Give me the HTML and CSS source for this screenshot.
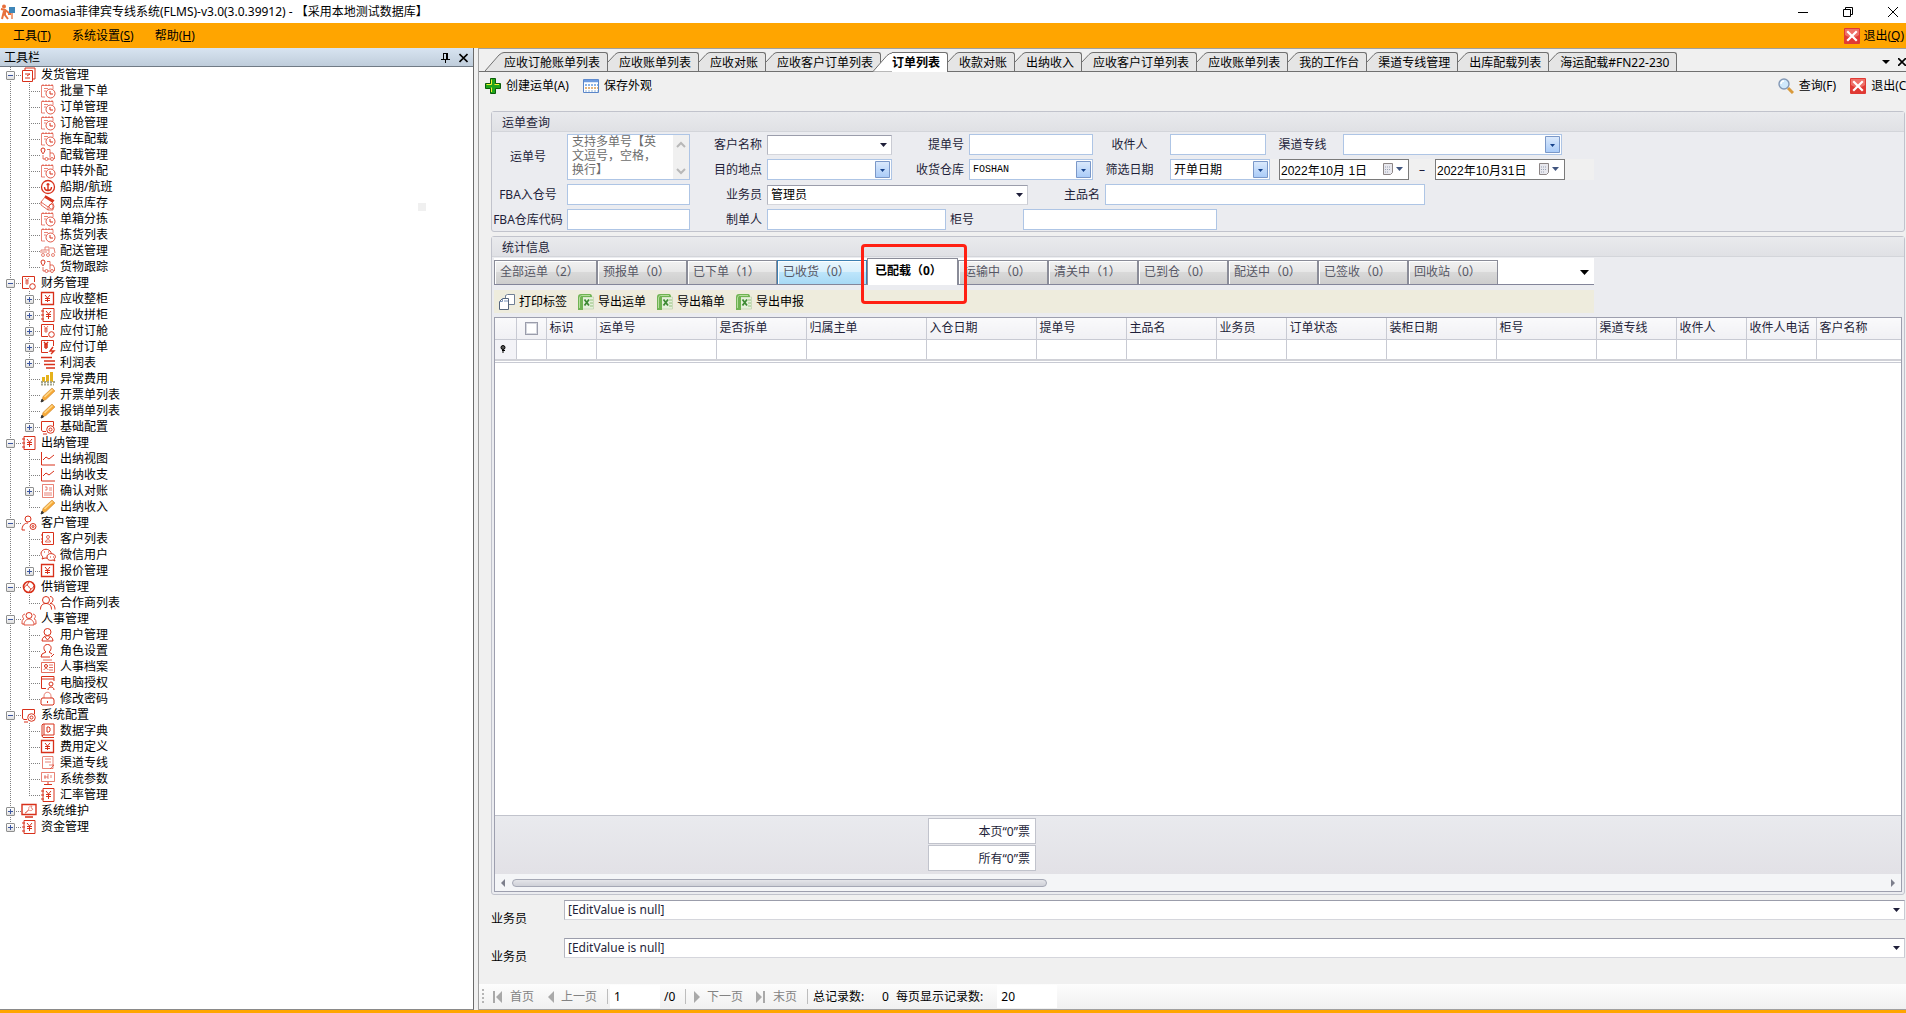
FILE: index.html
```html
<!DOCTYPE html>
<html lang="zh-CN">

<head>
    <meta charset="UTF-8">
    <meta name="viewport" content="width=device-width, initial-scale=1.0">
    <title>Zoomasia菲律宾专线系统(FLMS)</title>
    <link rel="stylesheet" href="styles.css">
</head>

<body>

    <!-- icon set -->
    <svg class="sprite" aria-hidden="true">
        <symbol id="doc" viewBox="0 0 16 16"><path d="M4 3V1h10v11h-2M1.500 3.500h10v11h-10zM4 7h5M4 11h5M6 9l3-2" /></symbol>
        <symbol id="order" viewBox="0 0 16 16"><path d="M5 14H1.500V2.500H13V6M3 1v2M6 1v2M9 1v2M12 1v2M4 5.500h4M4 8h2" opacity=".6" /><circle cx="10.500" cy="10.500" r="4.500" opacity=".8" /><path d="M10 8v3h3" /></symbol>
        <symbol id="truck" viewBox="0 0 16 16"><path d="M1 3a2 2 0 0 1 4 0c0 1-2 4-2 4S1 4 1 3z" /><path d="M7 2.500h3v8M3 8v4h2M8 12h2M10 6h3l1.500 3v3" opacity=".7" /><circle cx="6.500" cy="12" r="1.500" opacity=".7" /><circle cx="12" cy="12" r="1.500" opacity=".7" /></symbol>
        <symbol id="anchor" viewBox="0 0 16 16"><circle cx="8" cy="8" r="6.500" stroke-width="1.300" /><path d="M8 4v8M4.500 8c0 2 1.500 3.500 3.500 3.500S11.500 10 11.500 8M6.500 5.500h3" stroke-width="1.400" /></symbol>
        <symbol id="box" viewBox="0 0 16 16"><path d="M5 1l9 5M5 2l8 5" stroke-width="2" /><path d="M5 2L1 7l7 5 5-5M1 7v3l7 5M8 12v3h5V8" opacity=".7" /><circle cx="11.500" cy="11.500" r="2.500" opacity=".7" /></symbol>
        <symbol id="convoy" viewBox="0 0 16 16"><g opacity=".6"><path d="M1 10V7h4V4h4v6M5 7h4M10 5h4l1 5M2 9h5" /><circle cx="3" cy="12" r="1.500" /><circle cx="8" cy="12" r="1.500" /><circle cx="13" cy="12" r="1.500" /></g></symbol>
        <symbol id="yen" viewBox="0 0 16 16"><path d="M1.500 1.500h12v12h-12z" stroke-width="1.300" /><path d="M5 4l2.500 3L10 4M7.500 7v4M5 7.500h5M5 9.500h5" /></symbol>
        <symbol id="yenbook" viewBox="0 0 16 16"><path d="M3 1.500h11v13H3V1.500M1 4h3M1 8h3M1 12h3" /><path d="M6 4l2.500 3L11 4M8.500 7v5M6 7.500h5M6 9.500h5" /></symbol>
        <symbol id="yengear" viewBox="0 0 16 16"><path d="M8 13.500H1.500v-12h12V7" /><path d="M4 3l2 2.500L8 3M6 5v5M4 6h4M4 8h4" opacity=".7" /><circle cx="11.500" cy="11.500" r="2.800" /></symbol>
        <symbol id="yenbolt" viewBox="0 0 16 16"><path d="M8 13.500H1.500v-12h12V7" /><path d="M4 3l2 2.500L8 3M6 5v5M4 6h4M4 8h4M13 8l-3 4h4l-3 3" stroke-width="1.400" /></symbol>
        <symbol id="lines" viewBox="0 0 16 16"><path d="M1 2.500h11M4 6h11M4 9.500h11M6 13h9" stroke-width="1.500" /></symbol>
        <symbol id="bars" viewBox="0 0 16 16"><path d="M3.500 6v5M7.500 4v7M11.500 1v10" stroke="#e5b21c" stroke-width="3" /><path d="M1 11h14M1 13.500h13" stroke="#a3a58c" stroke-width="2" stroke-dasharray="2 1" /></symbol>
        <symbol id="pencil" viewBox="0 0 16 16"><path d="M1.500 14.500l1.500-5L12 1l3 3-9 8.500z" fill="#f7a836" stroke="#c98b3a" stroke-width=".6" /><path d="M4.500 10l8-7.500" stroke="#ffd88a" stroke-width="1.500" /><path d="M1 15l2.500-1-1.500-1.800z" fill="#333" stroke="#333" /></symbol>
        <symbol id="screengear" viewBox="0 0 16 16"><path d="M6 12.500H3l-1.500-1v-9h12V7M3 15h4" /><circle cx="10.500" cy="10.500" r="3.800" /><circle cx="10.500" cy="10.500" r="1.500" /></symbol>
        <symbol id="linechart" viewBox="0 0 16 16"><path d="M1.500 1v13H15M3 9l3-3 3 2 5-4" /></symbol>
        <symbol id="bill" viewBox="0 0 16 16"><path d="M2.500 1.500h11v13h-11zM5 4h2v3H5M9 5h3M9 7h3M4 10h8M4 12h8" opacity=".6" /></symbol>
        <symbol id="usergear" viewBox="0 0 16 16"><circle cx="7" cy="4" r="3" /><path d="M1 15c0-4 2-7 6-7M1 15h3" /><circle cx="12" cy="11.500" r="3" /><circle cx="12" cy="11.500" r="1" /></symbol>
        <symbol id="contact" viewBox="0 0 16 16"><path d="M2.500 1.500h11v12h-11zM1 4h2M1 8h2M1 11h2" /><circle cx="8" cy="6" r="1.500" opacity=".7" /><path d="M5.500 11c0-3 5-3 5 0z" opacity=".7" /></symbol>
        <symbol id="wechat" viewBox="0 0 16 16"><path d="M3 10l-1 2 3-1c6 1 8-4 5-7S2 2 1 6c0 2 1 3 2 4z" /><path d="M7 10c0-3 3-4 6-3s3 4 1 5l1 2-2-1c-3 1-6 0-6-3z" fill="#fff" /><path d="M4 5h1M8 5h1M10 10h1M13 10h1" /></symbol>
        <symbol id="swap" viewBox="0 0 16 16"><circle cx="8" cy="8" r="5.500" stroke-width="1.600" /><path d="M3 9c2-4 4-3 5-1s3 3 5-1M8 3l-2 3M8 13l2-3" /></symbol>
        <symbol id="pair" viewBox="0 0 16 16"><circle cx="6" cy="5" r="3.500" /><path d="M.5 14.500c0-4 2-6 5.500-6s5.500 2 5.500 6M10 1.500c4 0 4 6 0 7 3 0 5 2 5 6" /></symbol>
        <symbol id="team" viewBox="0 0 16 16"><circle cx="8" cy="4.500" r="3" /><path d="M3 14c0-8 10-8 10 0zM4 3C0 4 2 7 3 8c-2 0-2 2-2 5h2M12 3c4 1 2 4 1 5 2 0 2 2 2 5h-2" opacity=".8" /></symbol>
        <symbol id="user" viewBox="0 0 16 16"><circle cx="7.500" cy="5" r="3.500" /><path d="M2 14c0-7 11-7 11 0zM5 10l2.500 3L10 10" /></symbol>
        <symbol id="role" viewBox="0 0 16 16"><path d="M6 9C3 7 3 1.500 7.500 1.500S12 7 9 9M6 9l-4 2-1 3h9M9 9l3 2M11 14l3-3" /></symbol>
        <symbol id="idcard" viewBox="0 0 16 16"><path d="M3 1h9M1.500 3.500h13v10h-13zM9 6h4M9 8.500h4M9 11h4M4 11c0-2 4-2 4 0" opacity=".7" /><circle cx="6" cy="7" r="1.500" /></symbol>
        <symbol id="pcuser" viewBox="0 0 16 16"><path d="M6 13.500H1.500v-12h12.500V6M2 4h12" /><circle cx="11" cy="9" r="2" /><path d="M8 15c0-4 6-4 6 0" /></symbol>
        <symbol id="lock" viewBox="0 0 16 16"><path d="M4 7V5c0-5 7-5 7 0v2" opacity=".6" /><path d="M2 7h11l1 2v4l-1 1H2l-1-1V9zM7.500 10v2" /></symbol>
        <symbol id="dict" viewBox="0 0 16 16"><path d="M2 13V2l1-1h11v11H3l-1 1 1 1.500h11M4 1v11M7 4h2l1 1v3L9 9H7z" /></symbol>
        <symbol id="scroll" viewBox="0 0 16 16"><path d="M3 1.500h10v12H2.500V1.500M5 4h6M5 7h6M9 10h5l-4 4" opacity=".6" /></symbol>
        <symbol id="params" viewBox="0 0 16 16"><path d="M1.500 1.500h13v9h-13zM5 4v4M8 3v5M11 4v3M4 6h4" opacity=".6" /><path d="M4 13.500h8M8 11v3" /></symbol>
        <symbol id="repair" viewBox="0 0 16 16"><path d="M1 1.500h14v10H1zM4 14h8" stroke-width="1.400" /><path d="M4 10l4-4c-1-2 1-3 3-3l-1 2 2 1c-1 2-3 2-4 1l-3 3z" opacity=".5" /></symbol>
        <symbol id="close-red" viewBox="0 0 16 16"><rect width="16" height="16" rx="1" fill="#e03a34" stroke="none" /><path d="M1 1h14v6c-4 3-10 3-14 0z" fill="#ee7068" stroke="none" /><path d="M4 4l8 8M12 4l-8 8" stroke="#fff" stroke-width="2.200" stroke-linecap="square" /></symbol>
        <symbol id="excel" viewBox="0 0 16 16"><path d="M4 3h11.500v12H4z" fill="#e4f0da" stroke="#b5cfa5" stroke-width=".6" /><path d="M0 3q0-3 3-3h9q2 0 2 3H5v13H0z" fill="#6fb353" stroke="none" /><path d="M1.500 14V4q0-2 2-2.500H12" stroke="#b4dd9c" /><path d="M6.500 5.500l4.500 6M11 5.500l-4.500 6" stroke="#3d8a34" stroke-width="1.800" /><path d="M12 6h3M12 9h3M12 12h3" stroke="#94c07d" /></symbol>
        <symbol id="edge" viewBox="0 0 11 19"><path d="M0 19V10L7 2.500Q9 .5 11 .5V19z" fill="#e5e5e5" stroke="none" /><path d="M0 10L7 2.500Q9 .5 11 .5" stroke="#707070" /></symbol>
        <symbol id="edge-wide" viewBox="0 0 19 19"><path d="M0 19L14 3Q17 .5 19 .5V19z" stroke="none" /><path d="M0 19L14 3Q17 .5 19 .5" fill="none" stroke="#707070" /></symbol>
    </svg>

    <header class="titlebar">
        <svg class="logo" viewBox="0 0 16 16"><circle cx="4" cy="2.500" r="2" fill="#e8703c" /><path d="M1 5l4 1 4 3M5 6v5l3 4M4 7l-2 8M8 10h5" stroke="#e8703c" stroke-width="2" fill="none" /><path d="M9 3h6v6H9z" fill="#3f86b8" /><path d="M12 9v6" stroke="#f0a07c" stroke-width="2" /></svg>
        <h1>Zoomasia菲律宾专线系统(FLMS)-v3.0(3.0.39912) - 【采用本地测试数据库】</h1>
        <div class="window-buttons">
            <button aria-label="最小化"><svg viewBox="0 0 10 10"><path d="M0 5.500h10" /></svg></button>
            <button aria-label="还原"><svg viewBox="0 0 10 10"><path d="M.5 2.500h7v7h-7zM2.500 2.500v-2h7v7h-2" /></svg></button>
            <button aria-label="关闭"><svg viewBox="0 0 10 10"><path d="M0 0l10 10M10 0L0 10" /></svg></button>
        </div>
    </header>

    <nav class="menubar">
        <button>工具(<u>T</u>)</button>
        <button>系统设置(<u>S</u>)</button>
        <button>帮助(<u>H</u>)</button>
        <button class="exit"><svg class="icon"><use href="#close-red" /></svg>退出(<u>Q</u>)</button>
    </nav>

    <div class="workspace">

        <aside class="sidebar">
            <div class="sidebar-head">
                <h2>工具栏</h2>
                <button aria-label="固定"><svg viewBox="0 0 9 10"><path d="M2.500 0v6M2 .5h4M5.500 0v6M6.500 0v6M0 6.500h9M4.500 7v3" /></svg></button>
                <button aria-label="关闭"><svg viewBox="0 0 9 9"><path d="M.5 .5l8 8M8.500 .5l-8 8" stroke-width="1.600" /></svg></button>
            </div>

            <ul class="tree">
                <li>
                    <div class="node"><span class="lead"><button class="toggle minus" aria-label="折叠"></button></span><svg class="icon"><use href="#doc" /></svg>发货管理</div>
                    <ul>
                        <li class="node"><span class="lead"></span><svg class="icon"><use href="#order" /></svg>批量下单</li>
                        <li class="node"><span class="lead"></span><svg class="icon"><use href="#order" /></svg>订单管理</li>
                        <li class="node"><span class="lead"></span><svg class="icon"><use href="#order" /></svg>订舱管理</li>
                        <li class="node"><span class="lead"></span><svg class="icon"><use href="#order" /></svg>拖车配载</li>
                        <li class="node"><span class="lead"></span><svg class="icon"><use href="#truck" /></svg>配载管理</li>
                        <li class="node"><span class="lead"></span><svg class="icon"><use href="#order" /></svg>中转外配</li>
                        <li class="node"><span class="lead"></span><svg class="icon"><use href="#anchor" /></svg>船期/航班</li>
                        <li class="node"><span class="lead"></span><svg class="icon"><use href="#box" /></svg>网点库存</li>
                        <li class="node"><span class="lead"></span><svg class="icon"><use href="#order" /></svg>单箱分拣</li>
                        <li class="node"><span class="lead"></span><svg class="icon"><use href="#order" /></svg>拣货列表</li>
                        <li class="node"><span class="lead"></span><svg class="icon"><use href="#convoy" /></svg>配送管理</li>
                        <li class="node"><span class="lead"></span><svg class="icon"><use href="#truck" /></svg>货物跟踪</li>
                    </ul>
                </li>
                <li>
                    <div class="node"><span class="lead"><button class="toggle minus" aria-label="折叠"></button></span><svg class="icon"><use href="#yengear" /></svg>财务管理</div>
                    <ul>
                        <li class="node"><span class="lead"><button class="toggle" aria-label="展开"></button></span><svg class="icon"><use href="#yen" /></svg>应收整柜</li>
                        <li class="node"><span class="lead"><button class="toggle" aria-label="展开"></button></span><svg class="icon"><use href="#yenbook" /></svg>应收拼柜</li>
                        <li class="node"><span class="lead"><button class="toggle" aria-label="展开"></button></span><svg class="icon"><use href="#yengear" /></svg>应付订舱</li>
                        <li class="node"><span class="lead"><button class="toggle" aria-label="展开"></button></span><svg class="icon"><use href="#yenbolt" /></svg>应付订单</li>
                        <li class="node"><span class="lead"><button class="toggle" aria-label="展开"></button></span><svg class="icon"><use href="#lines" /></svg>利润表</li>
                        <li class="node"><span class="lead"></span><svg class="icon"><use href="#bars" /></svg>异常费用</li>
                        <li class="node"><span class="lead"></span><svg class="icon"><use href="#pencil" /></svg>开票单列表</li>
                        <li class="node"><span class="lead"></span><svg class="icon"><use href="#pencil" /></svg>报销单列表</li>
                        <li class="node"><span class="lead"><button class="toggle" aria-label="展开"></button></span><svg class="icon"><use href="#screengear" /></svg>基础配置</li>
                    </ul>
                </li>
                <li>
                    <div class="node"><span class="lead"><button class="toggle minus" aria-label="折叠"></button></span><svg class="icon"><use href="#yenbook" /></svg>出纳管理</div>
                    <ul>
                        <li class="node"><span class="lead"></span><svg class="icon"><use href="#linechart" /></svg>出纳视图</li>
                        <li class="node"><span class="lead"></span><svg class="icon"><use href="#linechart" /></svg>出纳收支</li>
                        <li class="node"><span class="lead"><button class="toggle" aria-label="展开"></button></span><svg class="icon"><use href="#bill" /></svg>确认对账</li>
                        <li class="node"><span class="lead"></span><svg class="icon"><use href="#pencil" /></svg>出纳收入</li>
                    </ul>
                </li>
                <li>
                    <div class="node"><span class="lead"><button class="toggle minus" aria-label="折叠"></button></span><svg class="icon"><use href="#usergear" /></svg>客户管理</div>
                    <ul>
                        <li class="node"><span class="lead"></span><svg class="icon"><use href="#contact" /></svg>客户列表</li>
                        <li class="node"><span class="lead"></span><svg class="icon"><use href="#wechat" /></svg>微信用户</li>
                        <li class="node"><span class="lead"><button class="toggle" aria-label="展开"></button></span><svg class="icon"><use href="#yen" /></svg>报价管理</li>
                    </ul>
                </li>
                <li>
                    <div class="node"><span class="lead"><button class="toggle minus" aria-label="折叠"></button></span><svg class="icon"><use href="#swap" /></svg>供销管理</div>
                    <ul>
                        <li class="node"><span class="lead"></span><svg class="icon"><use href="#pair" /></svg>合作商列表</li>
                    </ul>
                </li>
                <li>
                    <div class="node"><span class="lead"><button class="toggle minus" aria-label="折叠"></button></span><svg class="icon"><use href="#team" /></svg>人事管理</div>
                    <ul>
                        <li class="node"><span class="lead"></span><svg class="icon"><use href="#user" /></svg>用户管理</li>
                        <li class="node"><span class="lead"></span><svg class="icon"><use href="#role" /></svg>角色设置</li>
                        <li class="node"><span class="lead"></span><svg class="icon"><use href="#idcard" /></svg>人事档案</li>
                        <li class="node"><span class="lead"></span><svg class="icon"><use href="#pcuser" /></svg>电脑授权</li>
                        <li class="node"><span class="lead"></span><svg class="icon"><use href="#lock" /></svg>修改密码</li>
                    </ul>
                </li>
                <li>
                    <div class="node"><span class="lead"><button class="toggle minus" aria-label="折叠"></button></span><svg class="icon"><use href="#screengear" /></svg>系统配置</div>
                    <ul>
                        <li class="node"><span class="lead"></span><svg class="icon"><use href="#dict" /></svg>数据字典</li>
                        <li class="node"><span class="lead"></span><svg class="icon"><use href="#yen" /></svg>费用定义</li>
                        <li class="node"><span class="lead"></span><svg class="icon"><use href="#scroll" /></svg>渠道专线</li>
                        <li class="node"><span class="lead"></span><svg class="icon"><use href="#params" /></svg>系统参数</li>
                        <li class="node"><span class="lead"></span><svg class="icon"><use href="#yenbook" /></svg>汇率管理</li>
                    </ul>
                </li>
                <li class="node"><span class="lead"><button class="toggle" aria-label="展开"></button></span><svg class="icon"><use href="#repair" /></svg>系统维护</li>
                <li class="node"><span class="lead"><button class="toggle" aria-label="展开"></button></span><svg class="icon"><use href="#yenbook" /></svg>资金管理</li>
            </ul>
            <div class="float-chip"></div>
        </aside>

        <main class="main">

            <div class="doc-tabs">
                <button class="doc-tab"><svg class="wide"><use href="#edge-wide" /></svg><span>应收订舱账单列表</span></button>
                <button class="doc-tab"><svg><use href="#edge" /></svg><span>应收账单列表</span></button>
                <button class="doc-tab"><svg><use href="#edge" /></svg><span>应收对账</span></button>
                <button class="doc-tab"><svg><use href="#edge" /></svg><span>应收客户订单列表</span></button>
                <button class="doc-tab active"><svg class="wide"><use href="#edge-wide" /></svg><span>订单列表</span></button>
                <button class="doc-tab"><svg><use href="#edge" /></svg><span>收款对账</span></button>
                <button class="doc-tab"><svg><use href="#edge" /></svg><span>出纳收入</span></button>
                <button class="doc-tab"><svg><use href="#edge" /></svg><span>应收客户订单列表</span></button>
                <button class="doc-tab"><svg><use href="#edge" /></svg><span>应收账单列表</span></button>
                <button class="doc-tab"><svg><use href="#edge" /></svg><span>我的工作台</span></button>
                <button class="doc-tab"><svg><use href="#edge" /></svg><span>渠道专线管理</span></button>
                <button class="doc-tab"><svg><use href="#edge" /></svg><span>出库配载列表</span></button>
                <button class="doc-tab"><svg><use href="#edge" /></svg><span>海运配载#FN22-230</span></button>
                <div class="doc-tools">
                    <button aria-label="标签列表"><svg viewBox="0 0 8 8"><path d="M0 2h8L4 6z" fill="#000" stroke="none" /></svg></button>
                    <button aria-label="关闭标签"><svg viewBox="0 0 8 8"><path d="M0 0l8 8M8 0L0 8" stroke-width="1.600" /></svg></button>
                </div>
            </div>

            <div class="toolbar">
                <button><svg class="icon" viewBox="0 0 16 16"><path d="M5.500 .5h5v5h5v5h-5v5h-5v-5h-5v-5h5z" fill="#1fa51c" stroke="#0b5d0a" /><path d="M6.500 6.500v-5M1.500 6.500h5M6.500 14v-4.500M9.500 6.500H14" stroke="#f4f430" /></svg>创建运单(A)</button>
                <button><svg class="icon" viewBox="0 0 16 16"><path d="M.5 1.500h15v13H.5z" fill="#fff" stroke="#5b86c9" /><path d="M1 3h14" stroke="#6d9ade" stroke-width="2.500" /><path d="M2 7h13" stroke="#8db4e6" stroke-width="2" stroke-dasharray="2 1" /><path d="M2 10h13" stroke="#e3b37a" stroke-width="2" stroke-dasharray="2 1" /><path d="M2 13h13" stroke="#b9cfe6" stroke-width="1.500" stroke-dasharray="2 1" /></svg>保存外观</button>
                <div class="toolbar-right">
                    <button><svg class="icon" viewBox="0 0 16 16"><path d="M10 10l5 5" stroke="#d99a3b" stroke-width="3" /><circle cx="6" cy="6" r="5" fill="#cfe8fb" stroke="#8398b5" stroke-width="1.400" /><path d="M3 6c0-2 1-3 3-3" stroke="#fff" stroke-width="1.400" /></svg>查询(F)</button>
                    <button><svg class="icon"><use href="#close-red" /></svg>退出(C)</button>
                </div>
            </div>

            <section class="group">
                <h3>运单查询</h3>
                <form class="search">
                    <div class="search-left">
                        <label for="waybill">运单号</label>
                        <textarea id="waybill" placeholder="支持多单号【英文逗号，空格，换行】"></textarea>
                        <label for="fba-in">FBA入仓号</label>
                        <input type="text" id="fba-in">
                        <label for="fba-code">FBA仓库代码</label>
                        <input type="text" id="fba-code">
                    </div>
                    <div class="search-right">
                        <div class="row">
                            <label for="customer" class="end">客户名称</label>
                            <select id="customer" class="plain w-m"><option></option></select>
                            <label for="bl" class="end">提单号</label>
                            <input type="text" id="bl" class="w-n">
                            <label for="receiver">收件人</label>
                            <input type="text" id="receiver" class="w-s">
                            <label for="channel">渠道专线</label>
                            <select id="channel" class="w-l"><option></option></select>
                        </div>
                        <div class="row">
                            <label for="dest" class="end">目的地点</label>
                            <select id="dest" class="w-m"><option></option></select>
                            <label for="warehouse" class="end">收货仓库</label>
                            <select id="warehouse" class="w-n code"><option>FOSHAN</option></select>
                            <label for="date-type">筛选日期</label>
                            <select id="date-type" class="w-date"><option>开单日期</option></select>
                            <div class="dates">
                                <div class="date"><input type="text" aria-label="开始日期" value="2022年10月 1日"><button type="button" aria-label="选择开始日期"></button></div>
                                <span>–</span>
                                <div class="date"><input type="text" aria-label="结束日期" value="2022年10月31日"><button type="button" aria-label="选择结束日期"></button></div>
                            </div>
                        </div>
                        <div class="row">
                            <label for="sales" class="end">业务员</label>
                            <select id="sales" class="plain w-xl"><option>管理员</option></select>
                            <label for="product" class="end">主品名</label>
                            <input type="text" id="product" class="w-xxl">
                        </div>
                        <div class="row">
                            <label for="maker" class="end">制单人</label>
                            <input type="text" id="maker" class="w-maker">
                            <label for="container" class="start">柜号</label>
                            <input type="text" id="container" class="w-container">
                        </div>
                    </div>
                </form>
            </section>

            <section class="group stats">
                <h3>统计信息</h3>
                <div class="stat-tabs">
                    <button class="stat-tab all">全部运单（2）</button>
                    <button class="stat-tab">预报单（0）</button>
                    <button class="stat-tab">已下单（1）</button>
                    <button class="stat-tab hot">已收货（0）</button>
                    <button class="stat-tab active">已配载（0）</button>
                    <button class="stat-tab">运输中（0）</button>
                    <button class="stat-tab">清关中（1）</button>
                    <button class="stat-tab">已到仓（0）</button>
                    <button class="stat-tab">配送中（0）</button>
                    <button class="stat-tab">已签收（0）</button>
                    <button class="stat-tab">回收站（0）</button>
                    <button class="more" aria-label="更多"><svg viewBox="0 0 9 5"><path d="M0 0h9L4.500 5z" fill="#000" stroke="none" /></svg></button>
                </div>
                <div class="stat-tools">
                    <button><svg class="icon" viewBox="0 0 16 16"><path d="M6.500 1.500l2-1h7v10h-9z" fill="#fff" stroke="#6f7f96" /><path d="M.5 7.500l3-3h6v11h-9z" fill="#fff" stroke="#56667c" /><path d="M.5 7.500h3v-3M5 7h4" stroke="#7a93b8" /></svg>打印标签</button>
                    <button><svg class="icon"><use href="#excel" /></svg>导出运单</button>
                    <button><svg class="icon"><use href="#excel" /></svg>导出箱单</button>
                    <button><svg class="icon"><use href="#excel" /></svg>导出申报</button>
                </div>
                <div class="grid">
                    <table>
                        <colgroup>
                            <col class="c21"><col class="c30"><col class="c50"><col class="c120"><col class="c90"><col class="c120"><col class="c110"><col class="c90"><col class="c90"><col class="c70"><col class="c100"><col class="c110"><col class="c100"><col class="c80"><col class="c70"><col class="c70"><col>
                        </colgroup>
                        <thead>
                            <tr>
                                <th></th>
                                <th class="check"><input type="checkbox" aria-label="全选"></th>
                                <th>标识</th>
                                <th>运单号</th>
                                <th>是否拆单</th>
                                <th>归属主单</th>
                                <th>入仓日期</th>
                                <th>提单号</th>
                                <th>主品名</th>
                                <th>业务员</th>
                                <th>订单状态</th>
                                <th>装柜日期</th>
                                <th>柜号</th>
                                <th>渠道专线</th>
                                <th>收件人</th>
                                <th>收件人电话</th>
                                <th>客户名称</th>
                            </tr>
                        </thead>
                        <tbody>
                            <tr>
                                <td class="marker"><svg viewBox="0 0 6 8"><circle cx="3" cy="2.500" r="2" fill="#555" /><path d="M3 4v4M2 5.500h3" /></svg></td>
                                <td></td><td></td><td></td><td></td><td></td><td></td><td></td><td></td><td></td><td></td><td></td><td></td><td></td><td></td><td></td><td></td>
                            </tr>
                        </tbody>
                    </table>
                    <div class="grid-body"></div>
                    <div class="grid-summary">
                        <output>本页“0”票</output>
                        <output>所有“0”票</output>
                    </div>
                    <div class="scrollbar">
                        <button aria-label="向左滚动"><svg viewBox="0 0 4 8"><path d="M4 0v8L0 4z" /></svg></button>
                        <div class="track"><div class="thumb"></div></div>
                        <button aria-label="向右滚动"><svg viewBox="0 0 4 8"><path d="M0 0v8l4-4z" /></svg></button>
                    </div>
                </div>
            </section>

            <div class="edit-row">
                <label for="edit1">业务员</label>
                <select id="edit1" class="plain"><option>[EditValue is null]</option></select>
            </div>
            <div class="edit-row">
                <label for="edit2">业务员</label>
                <select id="edit2" class="plain"><option>[EditValue is null]</option></select>
            </div>

            <div class="pager">
                <i class="grip"></i>
                <button class="first" disabled><svg viewBox="0 0 11 12"><path d="M1 0h2v12H1zM10 0v12L4 6z" /></svg>首页</button>
                <button class="prev" disabled><svg viewBox="0 0 6 12"><path d="M6 0v12L0 6z" /></svg>上一页</button>
                <i class="sep"></i>
                <input type="text" class="page-no" aria-label="页码" value="1">
                <span class="total">/0</span>
                <i class="sep"></i>
                <button class="next" disabled><svg viewBox="0 0 6 12"><path d="M0 0v12l6-6z" /></svg>下一页</button>
                <button class="last" disabled><svg viewBox="0 0 11 12"><path d="M8 0h2v12H8zM1 0v12l6-6z" /></svg>末页</button>
                <i class="sep"></i>
                <span class="count">总记录数:</span>
                <span class="count-no">0</span>
                <label for="page-size">每页显示记录数:</label>
                <input type="text" class="page-size" id="page-size" value="20">
            </div>
        </main>
    </div>

</body>

</html>
```
FILE: styles.css
```css
*,
*::after {
    box-sizing: border-box;
}

body {
    margin: 0;
    height: 100vh;
    display: flex;
    flex-direction: column;
    overflow: hidden;
    background-color: #ffa500;
    color: #000;
    font-family: "Noto Sans", "Noto Sans CJK SC", sans-serif;
    font-size: 12px;
    line-height: 16px;
}

h1,
h2,
h3 {
    margin: 0;
    font-size: 12px;
    font-weight: normal;
}

button,
input,
select,
textarea {
    margin: 0;
    padding: 0;
    border: 0;
    border-radius: 0;
    background: none;
    color: inherit;
    font: inherit;
}

button {
    display: flex;
    align-items: center;
    white-space: nowrap;
}

svg {
    flex: none;
    fill: none;
    stroke: #000;
}

.sprite {
    display: none;
}

.icon {
    width: 16px;
    height: 16px;
    stroke: #d8301a;
}

/* title and menu */
.titlebar {
    height: 23px;
    display: flex;
    align-items: center;
    background-color: #fff;
}

.titlebar h1 {
    margin-left: 5px;
}

.logo {
    width: 16px;
    height: 16px;
    stroke: none;
}

.window-buttons {
    margin-left: auto;
    display: flex;
    gap: 35px;
    padding-right: 8px;
}

.window-buttons svg {
    width: 10px;
    height: 10px;
}

.menubar {
    height: 25px;
    display: flex;
    align-items: center;
    gap: 21px;
    padding-left: 13px;
}

.menubar .exit {
    margin-left: auto;
    padding-right: 2px;
}

.exit .icon {
    margin-right: 3px;
}

.workspace {
    flex: 1;
    min-height: 0;
    display: flex;
    margin-bottom: 3px;
    background-color: #f0f0f0;
}

/* left tool panel */
.sidebar {
    position: relative;
    width: 474px;
    flex: none;
    background-color: #fff;
    border-right: 1px solid #6a6a6a;
    border-bottom: 1px solid #8a8a8a;
}

.sidebar-head {
    height: 19px;
    display: flex;
    align-items: center;
    gap: 9px;
    padding: 2px 5px 0 4px;
    background: linear-gradient(#d8e4f1, #bfcddb);
    border-bottom: 1px solid #707a85;
}

.sidebar-head h2 {
    flex: 1;
}

.sidebar-head svg {
    width: 9px;
    height: 10px;
}

.tree,
.tree ul {
    margin: 0;
    padding: 0;
    list-style: none;
}

.tree {
    padding-left: 3px;
}

.tree ul {
    padding-left: 19px;
    background: repeating-linear-gradient(#808080 0 1px, transparent 1px 2px) 7px 0 / 1px 100% no-repeat;
}

.node {
    height: 16px;
    display: flex;
    align-items: center;
}

.node .icon {
    margin-right: 4px;
}

.lead {
    width: 18px;
    height: 16px;
    flex: none;
    padding: 4px 3px;
    background:
        repeating-linear-gradient(#808080 0 1px, transparent 1px 2px) 7px 0 / 1px 100% no-repeat,
        repeating-linear-gradient(90deg, #808080 0 1px, transparent 1px 2px) 7px 8px / 11px 1px no-repeat;
}

.node:last-child > .lead {
    background-size: 1px 8px, 11px 1px;
}

.toggle {
    width: 9px;
    height: 9px;
    border: 1px solid #8e8f8f;
    border-radius: 1px;
    background:
        linear-gradient(#3a55a0, #3a55a0) center / 5px 1px no-repeat,
        linear-gradient(#3a55a0, #3a55a0) center / 1px 5px no-repeat,
        linear-gradient(#fff, #e0e0e0);
}

.toggle.minus {
    background:
        linear-gradient(#3a55a0, #3a55a0) center / 5px 1px no-repeat,
        linear-gradient(#fff, #e0e0e0);
}

.float-chip {
    position: absolute;
    left: 418px;
    top: 155px;
    width: 8px;
    height: 8px;
    background-color: #f0f0f0;
}

/* document area */
.main {
    flex: 1;
    min-width: 0;
    display: flex;
    flex-direction: column;
    margin-left: 4px;
    border: solid #a0a0a0;
    border-width: 1px 0 1px 1px;
}

.doc-tabs {
    height: 23px;
    flex: none;
    display: flex;
    align-items: flex-end;
    padding-left: 6px;
    border-bottom: 1px solid #707070;
}

.doc-tab {
    height: 19px;
    flex: none;
}

.doc-tab svg {
    width: 11px;
    height: 19px;
    overflow: visible;
}

.doc-tab .wide {
    width: 19px;
    fill: #e5e5e5;
}

.doc-tab span {
    height: 19px;
    padding: 2px 7px 0 0;
    background-color: #e5e5e5;
    border: solid #707070;
    border-width: 1px 1px 0 0;
    border-top-right-radius: 3px;
}

.doc-tab.active {
    margin-left: -8px;
    height: 20px;
    margin-bottom: -1px;
    font-weight: bold;
}

.doc-tab.active .wide {
    height: 20px;
    fill: #fff;
}

.doc-tab.active span {
    height: 20px;
    background-color: #fff;
}

.doc-tools {
    margin-left: auto;
    height: 19px;
    display: flex;
    gap: 8px;
}

.doc-tools svg {
    width: 8px;
    height: 8px;
}

.toolbar {
    height: 28px;
    flex: none;
    display: flex;
    align-items: center;
    gap: 14px;
    margin: 0 0 11px 6px;
    overflow: hidden;
}

.toolbar .icon {
    margin-right: 5px;
}

.toolbar-right {
    margin: 0 -4px 0 auto;
    display: flex;
    gap: 14px;
}

.group {
    margin: 0 1px 4px 12px;
    border: 1px solid #c1c3cc;
    border-radius: 3px;
    background-color: #ebecf0;
    color: #1e1e39;
}

.group h3 {
    height: 20px;
    padding: 3px 10px 0;
    line-height: 16px;
    background: linear-gradient(#e9eaed, #e0e1e5);
    border-bottom: 1px solid #d3d5da;
}

/* search form */
.search {
    display: flex;
    padding: 2px 0 1px;
}

.search input,
.search select,
.search textarea,
.edit-row select {
    height: 21px;
    padding: 0 3px;
    border: 1px solid #aec5e5;
    background-color: #fff;
    color: #000;
}

.search-left {
    display: grid;
    grid-template-columns: 75px 123px;
    grid-template-rows: 46px 21px 21px;
    gap: 4px 0;
    align-items: center;
    white-space: nowrap;
}

.search-left label {
    padding-right: 3px;
    text-align: center;
}

.search .search-left textarea {
    height: 46px;
    padding: 0 24px 0 4px;
    border-color: #aec5e5;
    line-height: 14px;
    resize: none;
    overflow: hidden;
    background: #fff url("data:image/svg+xml,%3Csvg xmlns='http://www.w3.org/2000/svg' width='16' height='44'%3E%3Cpath d='M0 0h16v44H0z' fill='%23f0f0f0'/%3E%3Cpath d='M4 12l4-4 4 4M4 34l4 4 4-4' fill='none' stroke='%23b8b8b8' stroke-width='2'/%3E%3C/svg%3E") right center no-repeat;
}

textarea::placeholder {
    color: #6d6d6d;
}

.search-right {
    display: flex;
    flex-direction: column;
    gap: 4px;
}

.row {
    height: 21px;
    display: flex;
    align-items: center;
}

.row label {
    width: 77px;
    flex: none;
    padding-right: 4px;
    text-align: center;
}

.row .end {
    padding-right: 5px;
    text-align: right;
}

.row .start {
    padding-left: 4px;
    text-align: left;
}

select {
    appearance: none;
}

.search select {
    background: #fff url("data:image/svg+xml,%3Csvg xmlns='http://www.w3.org/2000/svg' width='15' height='17'%3E%3ClinearGradient id='g' x2='0' y2='1'%3E%3Cstop stop-color='%23dceafc'/%3E%3Cstop offset='1' stop-color='%23a9cbf8'/%3E%3C/linearGradient%3E%3Cpath d='M.5.5h14v16H.5z' fill='url(%23g)' stroke='%237b98c8'/%3E%3Cpath d='M5 8h5L7.500 11z' fill='%2315428b'/%3E%3C/svg%3E") right 1px center no-repeat;
}

.search .plain,
.edit-row .plain {
    height: 20px;
    border-color: #9b9dab #c9cbd3 #d5d6dc #b4b6c0;
    background: #fff url("data:image/svg+xml,%3Csvg xmlns='http://www.w3.org/2000/svg' width='7' height='4'%3E%3Cpath d='M0 0h7L3.500 4z' fill='%231e1e39'/%3E%3C/svg%3E") right 4px center no-repeat;
}

.w-s {
    width: 96px;
}

.w-date {
    width: 100px;
}

.w-n {
    width: 124px;
}

.w-m {
    width: 125px;
}

.w-maker {
    width: 179px;
}

.w-container {
    width: 194px;
}

.w-l {
    width: 219px;
}

.w-xl {
    width: 261px;
}

.w-xxl {
    width: 320px;
}

.search .code {
    font-family: "Liberation Mono", monospace;
    font-size: 10px;
}

.dates {
    display: flex;
    align-items: center;
    width: 324px;
    padding-left: 9px;
    background-color: #f0f0f0;
}

.dates > span {
    width: 26px;
    text-align: center;
}

.date {
    width: 130px;
    height: 21px;
    display: flex;
    align-items: center;
    background-color: #fff;
    border: 1px solid #7a7a7a;
}

.search .date input {
    width: 100px;
    height: 19px;
    padding: 0 1px;
    border: 0;
    font-family: "Liberation Sans", "Noto Sans CJK SC", sans-serif;
}

.date button {
    width: 22px;
    height: 13px;
    margin-left: 2px;
    background: url("data:image/svg+xml,%3Csvg xmlns='http://www.w3.org/2000/svg' width='22' height='13'%3E%3Cpath d='M1.500.5h9v9l-2 2h-7z' fill='%23e8e8ee' stroke='%238c8585'/%3E%3Cpath d='M3 4h6M3 6.500h6M3 9h4' stroke='%239aa3b5' stroke-dasharray='1 1'/%3E%3Cpath d='M14 4h7l-3.500 4z' fill='%2340557f'/%3E%3C/svg%3E") no-repeat;
}

/* statistics */
.stats {
    flex: 1;
    min-height: 0;
    display: flex;
    flex-direction: column;
    padding: 0 2px 2px;
    margin-bottom: 5px;
}

.stats h3 {
    margin: 0 -2px;
    flex: none;
}

.stat-tabs {
    width: 1100px;
    height: 27px;
    flex: none;
    display: flex;
    align-items: flex-end;
    margin-top: 1px;
    background-color: #fff;
    border-bottom: 1px solid #83859a;
}

.stat-tab {
    width: 90px;
    height: 24px;
    padding: 0 5px 2px;
    color: #565664;
    background: linear-gradient(#f2f2f2, #e6e6e6 50%, #d9d9d9 50%, #cdcdcd);
    border: 1px solid #8a8c98;
    border-bottom: 0;
    box-shadow: inset 1px 1px #fff;
}

.stat-tab.all {
    width: 103px;
}

.stat-tab.hot {
    background: linear-gradient(#e9f6fd, #d8effc 50%, #bde5fb 50%, #a7d9f5);
    border-color: #3c7fb1;
}

.stat-tab.active {
    position: relative;
    height: 27px;
    width: 91px;
    margin-bottom: -1px;
    padding: 0 7px 2px;
    background: #fff;
    color: #000;
    font-weight: bold;
}

.stat-tab.active::after {
    content: "";
    position: absolute;
    left: -7px;
    top: -15px;
    width: 106px;
    height: 60px;
    border: 3px solid #ff2013;
    border-radius: 4px;
}

.more {
    margin: auto 5px 9px auto;
}

.more svg {
    width: 9px;
    height: 5px;
}

.stat-tools {
    width: 1100px;
    height: 23px;
    flex: none;
    display: flex;
    align-items: center;
    gap: 11px;
    margin: 5px 0 4px;
    padding-left: 5px;
    background-color: #eeecdd;
    color: #000;
}

.stat-tools .icon {
    margin-right: 4px;
}

.grid {
    flex: 1;
    min-height: 0;
    display: flex;
    flex-direction: column;
    background-color: #fff;
    border: 1px solid #9d9fae;
}

.grid table {
    width: 100%;
    table-layout: fixed;
    border-collapse: collapse;
    border-bottom: 2px solid #d0d1d7;
}

.grid th,
.grid td {
    height: 21px;
    padding: 0 3px;
    border-right: 1px solid #c8cad3;
    border-bottom: 1px solid #c8cad3;
    font-weight: normal;
    text-align: left;
    white-space: nowrap;
}

.grid th {
    background: linear-gradient(#fafafb, #f0f0f4);
}

.grid th:last-child,
.grid td:last-child {
    border-right: 0;
}

.grid .marker {
    padding-left: 5px;
    background-color: #f3f3f7;
}

.marker svg {
    display: block;
    width: 6px;
    height: 8px;
}

.check input {
    appearance: none;
    display: block;
    width: 13px;
    height: 13px;
    margin: 0 auto;
    background-color: #fff;
    border: 1px solid #9b9dab;
    box-shadow: inset 0 0 0 1px #d6d8df;
}

.c21 { width: 21px; }
.c30 { width: 30px; }
.c50 { width: 50px; }
.c70 { width: 70px; }
.c80 { width: 80px; }
.c90 { width: 90px; }
.c100 { width: 100px; }
.c110 { width: 110px; }
.c120 { width: 120px; }

.grid-body {
    flex: 1;
    margin-top: 1px;
    border-top: 1px solid #c8cad3;
}

.grid-summary {
    height: 59px;
    flex: none;
    padding: 2px 0 0 433px;
    background: linear-gradient(#e9eaee, #e2e1e6);
    border-top: 1px solid #c1c3cc;
}

.grid-summary output {
    display: block;
    width: 108px;
    height: 26px;
    margin-bottom: 1px;
    padding: 5px 5px 0 0;
    text-align: right;
    line-height: 16px;
    background-color: #fff;
    border: 1px solid #c1c3cc;
}

.scrollbar {
    height: 17px;
    flex: none;
    display: flex;
    align-items: center;
    gap: 7px;
    padding: 0 6px;
    background-color: #f4f5f7;
}

.scrollbar svg {
    width: 4px;
    height: 8px;
    fill: #7d7f8c;
    stroke: none;
}

.track {
    flex: 1;
}

.thumb {
    width: 39%;
    height: 8px;
    background: linear-gradient(#e4e5e9, #cfd1d8);
    border: 1px solid #a5a8b5;
    border-radius: 4px;
}

.edit-row {
    height: 38px;
    flex: none;
    display: flex;
    align-items: center;
    padding: 0 1px 0 12px;
}

.edit-row label {
    width: 73px;
}

.edit-row .plain {
    flex: 1;
    align-self: flex-start;
    color: #1e1e39;
}

/* paging bar */
.pager {
    height: 25px;
    flex: none;
    display: flex;
    align-items: center;
    margin-top: 8px;
    white-space: nowrap;
    background: linear-gradient(#fdfdfd, #f0f0f0);
}

.pager button {
    gap: 7px;
    color: #838383;
}

.pager svg {
    width: 6px;
    height: 12px;
    fill: #a9a9a9;
    stroke: none;
}

.pager .first svg,
.pager .last svg {
    width: 11px;
}

.grip {
    width: 2px;
    height: 16px;
    margin: 0 8px 0 3px;
    background: repeating-linear-gradient(#b5b5b5 0 2px, transparent 2px 4px);
}

.prev {
    margin: 0 10px 0 14px;
}

.next {
    margin: 0 12px 0 8px;
}

.last {
    margin-right: 10px;
}

.sep {
    width: 1px;
    height: 15px;
    background-color: #bdbdbd;
}

.pager input {
    height: 23px;
    padding: 0 4px;
    background-color: #fff;
}

.page-no {
    width: 50px;
    margin: 0 4px 0 2px;
}

.total {
    width: 21px;
}

.count {
    width: 70px;
    padding-left: 5px;
}

.count-no {
    width: 18px;
    padding-left: 4px;
}

.pager .page-size {
    width: 60px;
    margin-left: 14px;
}
```
